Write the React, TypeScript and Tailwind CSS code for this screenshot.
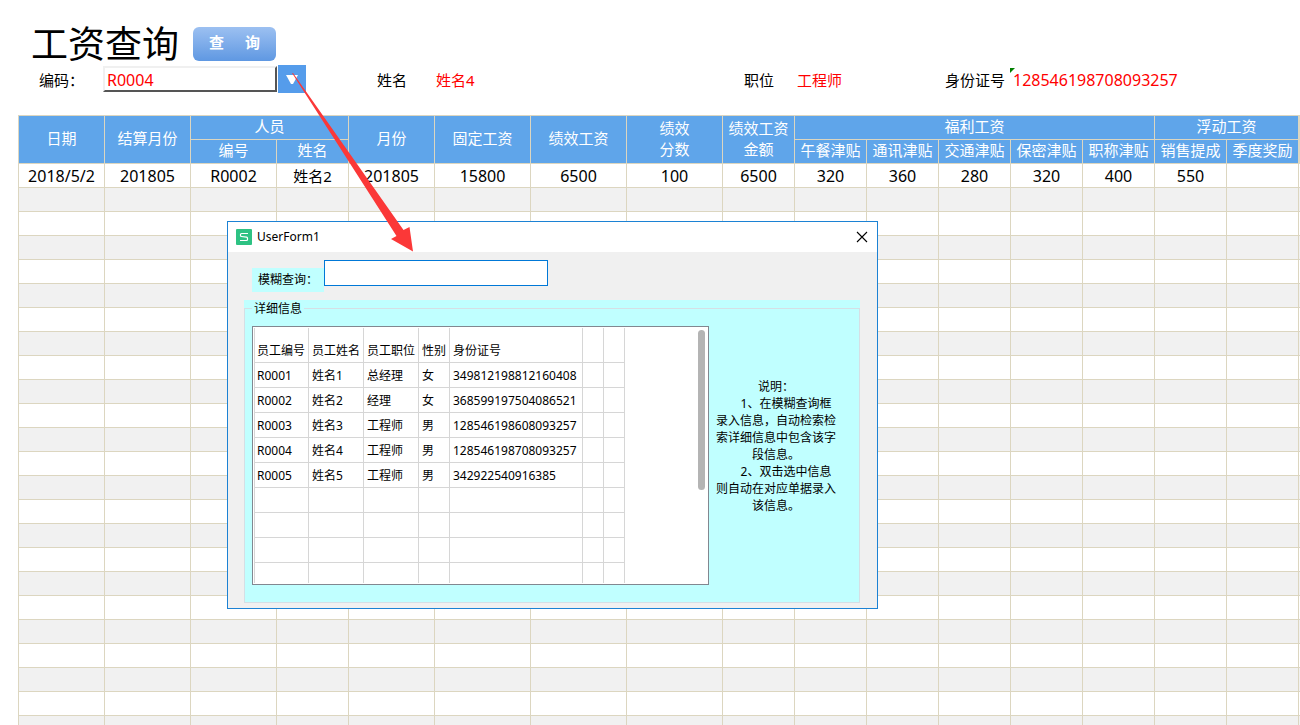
import React, { useState } from 'react';

const COL_WIDTHS = [86, 86, 86, 72, 86, 96, 96, 96, 72, 72, 72, 72, 72, 72, 72, 72];

const SALARY_ROW = [
  '2018/5/2', '201805', 'R0002', '姓名2', '201805', '15800', '6500', '100',
  '6500', '320', '360', '280', '320', '400', '550', '',
];

const EMPTY_ROWS = 23;

const EMPLOYEE_COLS = [
  { title: '员工编号', width: 54 },
  { title: '员工姓名', width: 55 },
  { title: '员工职位', width: 55 },
  { title: '性别', width: 31 },
  { title: '身份证号', width: 133 },
  { title: '', width: 21 },
  { title: '', width: 21 },
];

const EMPLOYEES = [
  ['R0001', '姓名1', '总经理', '女', '349812198812160408'],
  ['R0002', '姓名2', '经理', '女', '368599197504086521'],
  ['R0003', '姓名3', '工程师', '男', '128546198608093257'],
  ['R0004', '姓名4', '工程师', '男', '128546198708093257'],
  ['R0005', '姓名5', '工程师', '男', '342922540916385'],
  [], [], [],
];

const SheetHead: React.FC = () => {
  const th = 'h-6 px-0 pt-0 pb-[2px] font-normal border-r border-b border-[#dcd6c0]';
  return (
    <thead className="bg-[#5fa5ea] text-white text-[15px] leading-[21px]">
      <tr>
        <th rowSpan={2} className={th}>日期</th>
        <th rowSpan={2} className={th}>结算月份</th>
        <th colSpan={2} className={th}>人员</th>
        <th rowSpan={2} className={th}>月份</th>
        <th rowSpan={2} className={th}>固定工资</th>
        <th rowSpan={2} className={th}>绩效工资</th>
        <th rowSpan={2} className={th}>绩效<br />分数</th>
        <th rowSpan={2} className={th}>绩效工资<br />金额</th>
        <th colSpan={5} className={th}>福利工资</th>
        <th colSpan={2} className={th}>浮动工资</th>
        <th rowSpan={2} className={th}></th>
      </tr>
      <tr>
        {['编号', '姓名', '午餐津贴', '通讯津贴', '交通津贴', '保密津贴', '职称津贴', '销售提成', '季度奖励'].map((name) => (
          <th key={name} className={th}>{name}</th>
        ))}
      </tr>
    </thead>
  );
};

const SalarySheet: React.FC = () => (
  <table className="w-full table-fixed border-separate border-spacing-0 border-l border-t border-[#dcd6c0]">
    <colgroup>
      {COL_WIDTHS.map((w, i) => <col key={i} style={{ width: w }} />)}
      <col />
    </colgroup>
    <SheetHead />
    <tbody>
      <tr className="text-center text-[16px] leading-[22px]">
        {SALARY_ROW.map((value, i) => (
          <td key={i} className={`h-6 p-0 border-r border-b border-[#dcd6c0] ${i === 3 ? 'text-[15px]' : ''}`}>{value}</td>
        ))}
        <td className="p-0 border-b border-[#dcd6c0]"></td>
      </tr>
      {Array.from({ length: EMPTY_ROWS }, (_, r) => (
        <tr key={r} className={r % 2 === 0 ? 'bg-[#f1f1f1]' : 'bg-white'}>
          {COL_WIDTHS.map((_, i) => (
            <td key={i} className="h-6 p-0 border-r border-b border-[#dcd6c0]"></td>
          ))}
          <td className="p-0 border-b border-[#dcd6c0]"></td>
        </tr>
      ))}
    </tbody>
  </table>
);

const EmployeeList: React.FC = () => (
  <div className="flex w-[457px] items-start justify-between border border-[#828790] bg-white pl-px py-px">
    <table className="table-fixed w-[371px] border-separate border-spacing-0 text-left">
      <colgroup>
        {EMPLOYEE_COLS.map((c, i) => <col key={i} style={{ width: i === 0 ? c.width + 1 : c.width }} />)}
      </colgroup>
      <thead>
        <tr>
          {EMPLOYEE_COLS.map((c, i) => (
            <th key={i} className="h-[35px] pl-[3px] pr-0 first:pl-[2px] pt-[10px] pb-0 font-normal whitespace-nowrap border-r border-b border-[#d6d6d6] first:border-l">{c.title}</th>
          ))}
        </tr>
      </thead>
      <tbody>
        {EMPLOYEES.map((row, r) => (
          <tr key={r}>
            {EMPLOYEE_COLS.map((_, i) => (
              <td key={i} className="h-[25px] pl-[3px] pr-0 first:pl-[2px] py-0 whitespace-nowrap border-r border-b border-[#d6d6d6] first:border-l">{row[i]}</td>
            ))}
          </tr>
        ))}
        <tr>
          {EMPLOYEE_COLS.map((_, i) => (
            <td key={i} className="h-5 p-0 border-r border-[#d6d6d6] first:border-l"></td>
          ))}
        </tr>
      </tbody>
    </table>
    <div className="mt-[2px] mr-[3px] h-[160px] w-[7px] rounded-full bg-[#b4b4b4]"></div>
  </div>
);

const UserForm: React.FC = () => {
  const [keyword, setKeyword] = useState('');

  return (
    <div role="dialog" aria-labelledby="form-title" className="absolute left-[227px] top-[221px] w-[651px] border border-[#1c82d4] bg-[#f0f0f0] text-[12px] leading-[17px] text-black">
      <div className="flex h-[30px] items-center bg-white pl-2 pr-[9px] pb-px">
        <svg width="16" height="16" viewBox="0 0 16 16" className="mr-[5px]">
          <rect width="16" height="16" rx="1" fill="#2dc283" />
          <path d="M12 4.5H5.5Q4.5 4.5 4.5 5.5V6.5Q4.5 7.5 5.5 7.5L10.5 8.2Q11.5 8.4 11.5 9.3V10.5Q11.5 11.5 10.5 11.5H4" fill="none" stroke="#fff" strokeWidth="1.2" />
        </svg>
        <h2 id="form-title">UserForm1</h2>
        <button type="button" aria-label="关闭" className="ml-auto">
          <svg width="12" height="12" viewBox="0 0 12 12" className="block">
            <path d="M1 1L11 11M11 1L1 11" stroke="#000" strokeWidth="1.1" />
          </svg>
        </button>
      </div>

      <div className="px-4 pt-2 pb-[5px]">
        <div className="flex items-start pl-2">
          <label htmlFor="keyword" className="mt-2 h-6 w-[72px] bg-[#c0ffff] pl-[6px] leading-6">模糊查询：</label>
          <input
            id="keyword"
            value={keyword}
            onChange={(e) => setKeyword(e.target.value)}
            className="h-[26px] w-[224px] border border-[#0078d7] bg-white px-1 outline-none"
          />
        </div>

        <div className="mt-2 w-[616px] bg-[#c0ffff]">
          <fieldset className="border border-[#d5dfe5] px-[7px] pb-[17px]">
            <legend className="px-[2px]">详细信息</legend>
            <div className="mt-[9px] flex items-center">
              <EmployeeList />
              <div className="ml-[6px] -mt-5 w-[122px] text-center">
                <p>说明：</p>
                <p className="pl-5">1、在模糊查询框</p>
                <p>录入信息，自动检索检索详细信息中包含该字段信息。</p>
                <p className="pl-5">2、双击选中信息</p>
                <p>则自动在对应单据录入该信息。</p>
              </div>
            </div>
          </fieldset>
        </div>
      </div>
    </div>
  );
};

export default function App() {
  const [code, setCode] = useState('R0004');

  return (
    <main className="relative h-screen overflow-hidden bg-white pl-[18px] font-['Noto_Sans','Noto_Sans_CJK_SC',sans-serif] text-black">
      <div className="flex h-[65px] items-center pl-[13px] pt-[22px]">
        <h1 className="mr-[14px] text-[37px] leading-[41px]">工资查询</h1>
        <button type="button" className="flex h-[34px] w-[83px] items-center justify-between rounded-md bg-linear-to-b from-[#9cc0f1] to-[#5f98e2] px-4 pb-[2px] text-[15px] font-bold text-white">
          <span>查</span>
          <span>询</span>
        </button>
      </div>

      <div className="mb-[22px] flex h-7 items-center text-[15px] leading-6">
        <label htmlFor="code" className="w-[85px] pl-[21px] pt-[2px]">编码：</label>
        <input
          id="code"
          value={code}
          onChange={(e) => setCode(e.target.value)}
          className="h-[26px] w-[174px] border-2 border-t-[#f0f0f0] border-l-[#f0f0f0] border-r-[#555555] border-b-[#555555] bg-white px-[2px] pt-[2px] text-[16px] text-[#ff0000] outline-none"
        />
        <button type="button" aria-label="选择编码" className="ml-px flex h-7 w-7 items-center justify-center bg-[#559ceb]">
          <svg width="12" height="9" viewBox="0 0 12 9">
            <path d="M0 0H12L7 9H5Z" fill="#fff" />
          </svg>
        </button>
        <div className="ml-[71px] flex pt-[2px]">
          <span className="w-[59px]">姓名</span>
          <span className="w-[308px] text-[#ff0000]">姓名4</span>
          <span className="w-[53px]">职位</span>
          <span className="w-[148px] text-[#ff0000]">工程师</span>
          <span className="w-[65px]">身份证号</span>
          <span className="relative pl-[3px] text-[16px] text-[#ff0000]">
            <svg width="5" height="5" viewBox="0 0 5 5" className="absolute left-0 top-0">
              <path d="M0 0H5L0 5Z" fill="#008000" />
            </svg>
            128546198708093257
          </span>
        </div>
      </div>

      <SalarySheet />
      <UserForm />

      {/* arrow from the drop-down button to the search box */}
      <svg width="130" height="182" viewBox="0 0 130 182" className="pointer-events-none absolute left-[288px] top-[72px]">
        <path d="M4 1L5 1L115.500 158L121.500 155L125 179.500L103 167L108.500 164Z" fill="#fb3838" />
      </svg>
    </main>
  );
}
